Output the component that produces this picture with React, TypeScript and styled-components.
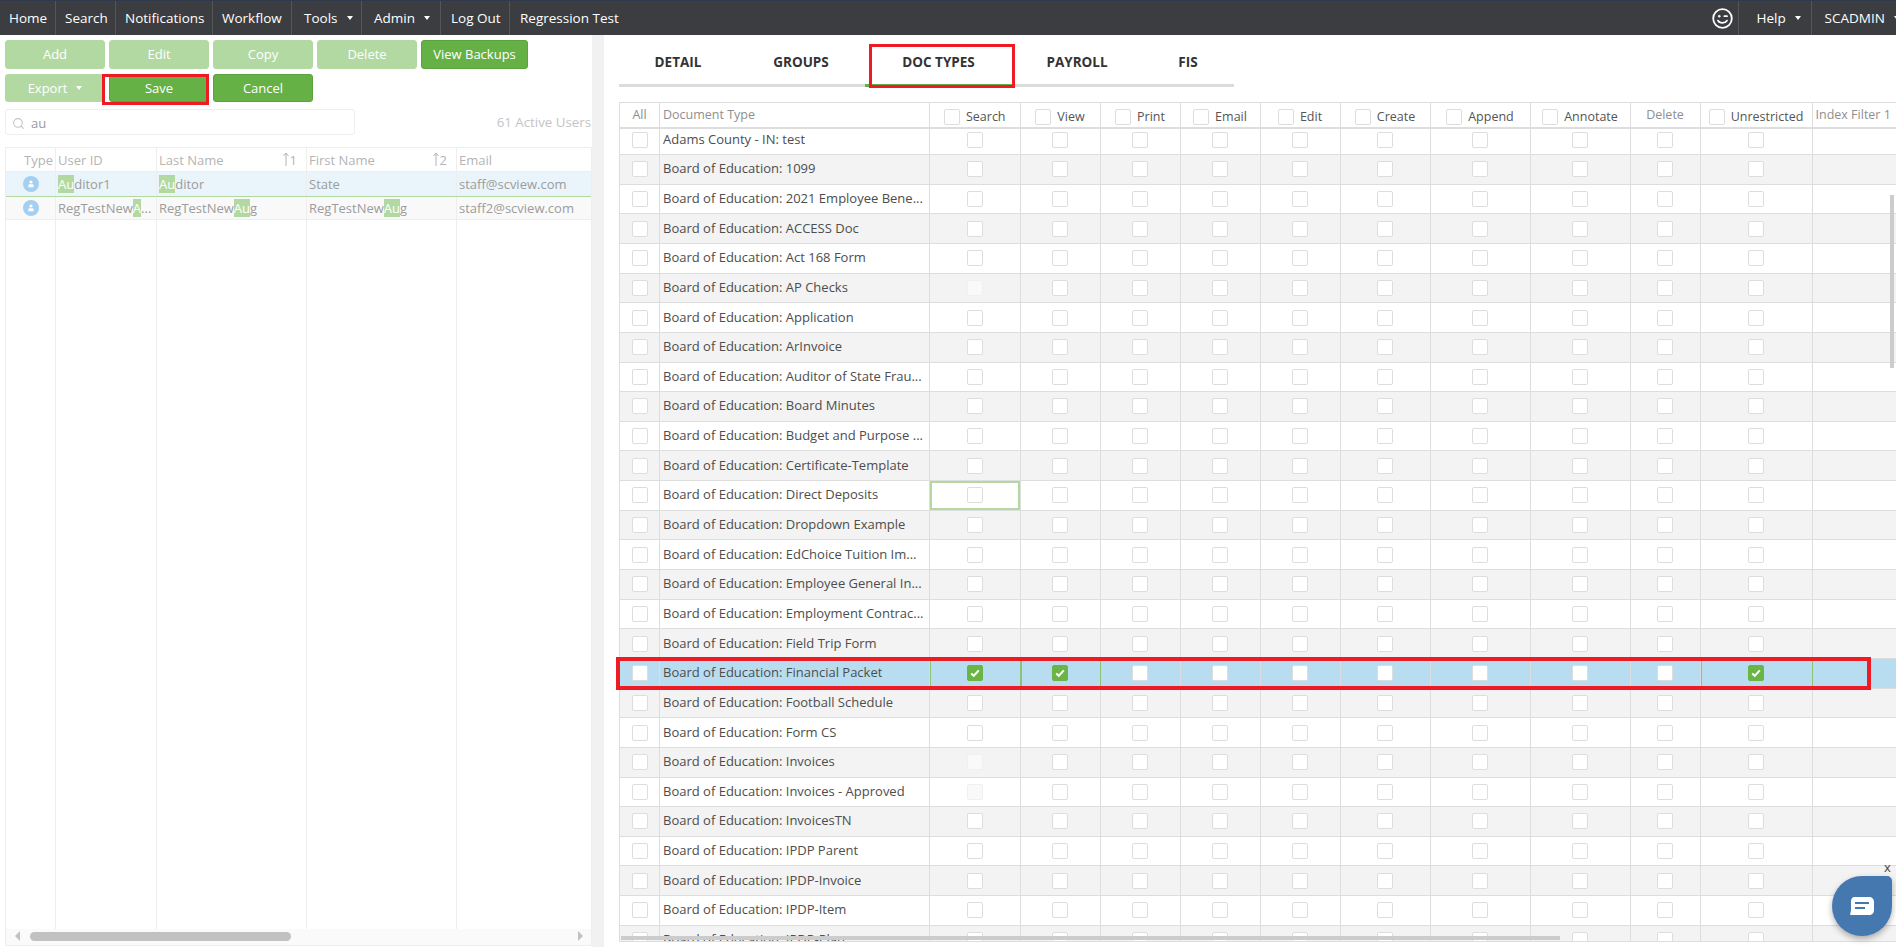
import React from "react";
import styled, { createGlobalStyle } from "styled-components";
import { Search as SearchIcon } from "lucide-react";

const Global = createGlobalStyle`
  html, body { margin: 0; padding: 0; background: #fff; }
  * { box-sizing: border-box; }
  body { font-family: "Open Sans", "Liberation Sans", sans-serif; font-size: 12px; }
`;

const Page = styled.div`
  position: relative;
  width: 1896px;
  height: 947px;
  overflow: hidden;
  display: flex;
  flex-direction: column;
  background: #fff;
`;

const Nav = styled.nav`
  height: 35px;
  flex: none;
  display: flex;
  align-items: stretch;
  background: #3c3d40;
  border-top: 1px solid #2f3a4d;
  color: #fff;
  font-size: 13.5px;
`;

const NavItem = styled.div<{ $w: number; $pad?: number; $plain?: boolean }>`
  width: ${(p) => p.$w}px;
  flex: none;
  display: flex;
  align-items: center;
  padding-left: ${(p) => p.$pad ?? 9}px;
  white-space: nowrap;
  border-right: ${(p) => (p.$plain ? "none" : "1px solid #55565a")};
`;

const NavSpacer = styled.div`
  flex: 1;
`;

const Caret = styled.span`
  display: inline-block;
  vertical-align: 3px;
  margin-left: 9px;
  width: 0;
  height: 0;
  border-left: 3.5px solid transparent;
  border-right: 3.5px solid transparent;
  border-top: 4px solid #fff;
`;

const Body = styled.div`
  flex: 1;
  min-height: 0;
  display: flex;
`;

const LeftPanel = styled.section`
  width: 592px;
  flex: none;
  display: flex;
  flex-direction: column;
  padding: 5px 0 1px 5px;
`;

const Divider = styled.div`
  width: 12px;
  flex: none;
  background: #f1f1f1;
`;

const ButtonRow = styled.div`
  display: flex;
  gap: 4px;
  margin-bottom: 5px;
`;

const Btn = styled.button<{ $w?: number; $h: number; $faded?: boolean }>`
  width: ${(p) => p.$w ?? 100}px;
  height: ${(p) => p.$h}px;
  flex: none;
  padding: 0 0 1px;
  font: inherit;
  font-size: 13px;
  color: #fff;
  border-radius: 3px;
  background: ${(p) => (p.$faded ? "#b3d9a3" : "#66b145")};
  border: 1px solid ${(p) => (p.$faded ? "#b3d9a3" : "#5ca23d")};
`;

const SearchRow = styled.div`
  display: flex;
  align-items: center;
  justify-content: space-between;
  margin-top: 2px;
  height: 26px;
`;

const SearchBox = styled.div`
  width: 350px;
  height: 26px;
  border: 1px solid #eee;
  border-radius: 3px;
  display: flex;
  align-items: center;
  padding: 2px 0 0 6px;
  gap: 6px;
  color: #9a9a9a;
  font-size: 13px;
`;

const UserCount = styled.div`
  color: #c4c4c4;
  font-size: 13.3px;
  white-space: nowrap;
  padding-right: 1px;
`;

const UserTable = styled.div`
  margin-top: 12px;
  flex: 1;
  min-height: 0;
  display: flex;
  flex-direction: column;
  border: 1px solid #eee;
  color: #9c9c9c;
  font-size: 13px;
`;

const UserRow = styled.div<{ $bg?: string; $line?: string; $h?: number; $fill?: boolean }>`
  display: grid;
  grid-template-columns: 50px 101px 150px 150px 1fr;
  height: ${(p) => (p.$fill ? "auto" : `${p.$h}px`)};
  flex: ${(p) => (p.$fill ? 1 : "none")};
  background: ${(p) => p.$bg ?? "#fff"};
  border-bottom: ${(p) => (p.$line ? `1px solid ${p.$line}` : "none")};
`;

const UserCell = styled.div<{ $right?: boolean; $center?: boolean }>`
  min-width: 0;
  display: flex;
  align-items: center;
  justify-content: ${(p) => (p.$center ? "center" : p.$right ? "flex-end" : "flex-start")};
  padding: 0 2px;
  white-space: nowrap;
  overflow: hidden;
  border-right: 1px solid #eeeeee;
  &:last-child { border-right: none; }
`;

const HeadLabel = styled.span`
  flex: 1;
  color: #b4b4b4;
`;

const HeadLabelEnd = styled.span`
  color: #b4b4b4;
`;

const SortMark = styled.span`
  display: flex;
  align-items: center;
  margin-right: 7px;
  color: #b4b4b4;
`;

const Hit = styled.mark`
  background: #b3d9a3;
  color: #fff;
  padding: 3px 0;
`;

const Clip = styled.span`
  overflow: hidden;
  white-space: nowrap;
`;

const HScroll = styled.div`
  height: 16px;
  flex: none;
  display: flex;
  align-items: center;
  background: #fafafa;
  padding: 0 8px 2px 9px;
`;

const HThumb = styled.div`
  width: 261px;
  height: 9px;
  margin-left: 10px;
  border-radius: 5px;
  background: #c1c1c1;
`;

const HSpacer = styled.div`
  flex: 1;
`;

const ArrowL = styled.span`
  width: 0;
  height: 0;
  border-top: 5px solid transparent;
  border-bottom: 5px solid transparent;
  border-right: 5px solid #c1c1c1;
`;

const ArrowR = styled.span`
  width: 0;
  height: 0;
  border-top: 5px solid transparent;
  border-bottom: 5px solid transparent;
  border-left: 5px solid #c1c1c1;
`;

const RightPanel = styled.section`
  position: relative;
  flex: 1;
  min-width: 0;
  display: flex;
  flex-direction: column;
  padding-left: 15px;
`;

const Tabs = styled.div`
  width: 615px;
  height: 52px;
  flex: none;
  display: flex;
  border-bottom: 3px solid #dcdcdc;
`;

const Tab = styled.div<{ $w: number; $active?: boolean }>`
  width: ${(p) => p.$w}px;
  height: 52px;
  flex: none;
  padding-top: 4px;
  display: flex;
  align-items: center;
  justify-content: center;
  font-weight: 700;
  font-size: 13.5px;
  color: #333;
  border-bottom: 3px solid ${(p) => (p.$active ? "#66b145" : "transparent")};
`;

const DocTable = styled.div`
  margin-top: 15px;
  flex: none;
  height: 840px;
  display: flex;
  flex-direction: column;
  overflow: hidden;
  border-left: 1px solid #dddddd;
  border-bottom: 1px solid #dddddd;
  color: #4d4d4d;
  font-size: 13px;
`;

const COLS = "40px 270px 90.5px 80px 80px 80px 80px 90px 100px 100px 70px 112px 85px";

const HeadRow = styled.div`
  display: grid;
  grid-template-columns: ${COLS};
  height: 27px;
  flex: none;
  position: relative;
  z-index: 1;
  background: #fff;
  border-top: 1px solid #dddddd;
  border-bottom: 2px solid #dddddd;
`;

const HeadCell = styled.div<{ $align?: string; $muted?: boolean; $up?: boolean }>`
  min-width: 0;
  display: flex;
  align-items: center;
  justify-content: ${(p) => p.$align ?? "center"};
  gap: 6px;
  padding: ${(p) => (p.$up ? "0 3px 2px" : "3px 3px 0")};
  white-space: nowrap;
  overflow: hidden;
  font-size: 12.5px;
  color: ${(p) => (p.$muted ? "#8f8f8f" : "#555")};
  border-right: 1px solid #dddddd;
`;

const RowsViewport = styled.div`
  flex: 1;
  min-height: 0;
  overflow: hidden;
`;

const RowsInner = styled.div`
  margin-top: -3.6px;
`;

const DocRow = styled.div<{ $bg: string }>`
  display: grid;
  grid-template-columns: ${COLS};
  height: 29.65px;
  background: ${(p) => p.$bg};
  border-bottom: 1px solid #dddddd;
`;

const DocCell = styled.div<{ $state?: "on" | "focus" }>`
  min-width: 0;
  display: flex;
  align-items: center;
  justify-content: center;
  border-right: 1px solid ${(p) => (p.$state === "on" ? "#8cc474" : "#dddddd")};
  box-shadow: ${(p) =>
    p.$state === "on"
      ? "inset 1px 0 0 #8cc474"
      : p.$state === "focus"
      ? "inset 0 0 0 2px #b3d9a3"
      : "none"};
`;

const NameCell = styled(DocCell)`
  justify-content: flex-start;
  padding: 0 3px 2px;
`;

const Box = styled.span<{ $state?: "on" | "off" }>`
  width: 16px;
  height: 16px;
  flex: none;
  display: inline-flex;
  align-items: center;
  justify-content: center;
  border-radius: 2px;
  background: ${(p) => (p.$state === "on" ? "#6bb544" : p.$state === "off" ? "#f9f9f9" : "#fff")};
  border: 1px solid ${(p) => (p.$state === "on" ? "#6bb544" : p.$state === "off" ? "#f0f0f0" : "#dddddd")};
`;

const VScrollThumb = styled.div`
  position: absolute;
  right: 2px;
  top: 160px;
  width: 4px;
  height: 173px;
  background: #cccccc;
`;

const BottomThumb = styled.div`
  position: absolute;
  left: 17px;
  top: 901px;
  width: 939px;
  height: 4px;
  background: #cccccc;
`;

const RedFrame = styled.div<{ $x: number; $y: number; $w: number; $h: number; $t: number }>`
  position: absolute;
  left: ${(p) => p.$x}px;
  top: ${(p) => p.$y}px;
  width: ${(p) => p.$w}px;
  height: ${(p) => p.$h}px;
  border: ${(p) => p.$t}px solid #ed1c24;
  pointer-events: none;
`;

const ChatClose = styled.div`
  position: absolute;
  left: 1884px;
  top: 859px;
  color: #444;
  font-size: 13px;
  line-height: 16px;
`;

const ChatBubble = styled.div`
  position: absolute;
  left: 1832px;
  top: 876px;
  width: 60px;
  height: 60px;
  display: flex;
  align-items: center;
  justify-content: center;
  background: #4678b0;
  border-radius: 50% 5px 50% 50%;
  box-shadow: 0 3px 6px rgba(0, 0, 0, 0.3);
`;

const Check = () => (
  <svg width="12" height="12" viewBox="0 0 12 12" fill="none">
    <path d="M2.2 6.4 4.8 8.8 9.8 3.4" stroke="#fff" strokeWidth="2" />
  </svg>
);

const Person = () => (
  <svg width="16" height="16" viewBox="0 0 16 16">
    <circle cx="8" cy="8" r="8" fill="#a4cff0" />
    <circle cx="8" cy="6" r="1.6" fill="#fff" />
    <path d="M5.4 11.2V9.6c0-.8.6-1.3 1.3-1.3h2.6c.7 0 1.3.5 1.3 1.3v1.6z" fill="#fff" />
  </svg>
);

const Arrow = () => (
  <svg width="8" height="15" viewBox="0 0 8 15" fill="none" stroke="#b4b4b4" strokeWidth="1">
    <path d="M4 14V1M1.5 4 4 1l2.5 3" />
  </svg>
);

const Smiley = () => (
  <svg width="21" height="21" viewBox="0 0 21 21" fill="none" stroke="#fff" strokeWidth="1.8" strokeLinecap="round">
    <circle cx="10.5" cy="10.5" r="9.3" />
    <circle cx="7.2" cy="8.2" r="1" fill="#fff" strokeWidth="0.6" />
    <path d="M12.4 8.2h2.6" />
    <path d="M6 12.6c1.6 3 7.2 3 9 0" />
  </svg>
);

const ChatIcon = () => (
  <svg width="24" height="18" viewBox="0 0 24 18">
    <path d="M5 0h14c3 0 5 2 5 5v8c0 3-2 5-5 5H1c-.6 0-1-.5-.8-1C.6 15 1 14 1 13V5c0-3 1-5 4-5z" fill="#fff" />
    <path d="M5 6h14M5 11h10" stroke="#4678b0" strokeWidth="2" />
  </svg>
);

const DOCS = [
  "Adams County - IN: test",
  "Board of Education: 1099",
  "Board of Education: 2021 Employee Bene...",
  "Board of Education: ACCESS Doc",
  "Board of Education: Act 168 Form",
  "Board of Education: AP Checks",
  "Board of Education: Application",
  "Board of Education: ArInvoice",
  "Board of Education: Auditor of State Frau...",
  "Board of Education: Board Minutes",
  "Board of Education: Budget and Purpose ...",
  "Board of Education: Certificate-Template",
  "Board of Education: Direct Deposits",
  "Board of Education: Dropdown Example",
  "Board of Education: EdChoice Tuition Im...",
  "Board of Education: Employee General In...",
  "Board of Education: Employment Contrac...",
  "Board of Education: Field Trip Form",
  "Board of Education: Financial Packet",
  "Board of Education: Football Schedule",
  "Board of Education: Form CS",
  "Board of Education: Invoices",
  "Board of Education: Invoices - Approved",
  "Board of Education: InvoicesTN",
  "Board of Education: IPDP Parent",
  "Board of Education: IPDP-Invoice",
  "Board of Education: IPDP-Item",
  "Board of Education: IPDP-Plan",
];

const PERMS = ["Search", "View", "Print", "Email", "Edit", "Create", "Append", "Annotate", "Delete", "Unrestricted"];
const SELECTED = "Board of Education: Financial Packet";
const FOCUSED = "Board of Education: Direct Deposits";
const SEARCH_OFF = ["Board of Education: AP Checks", "Board of Education: Invoices", "Board of Education: Invoices - Approved"];
const CHECKED = ["Search", "View", "Unrestricted"];

export default function App() {
  return (
    <Page>
      <Global />
      <Nav>
        <NavItem $w={56}>Home</NavItem>
        <NavItem $w={60}>Search</NavItem>
        <NavItem $w={97}>Notifications</NavItem>
        <NavItem $w={79}>Workflow</NavItem>
        <NavItem $w={70} $pad={12}>Tools<Caret /></NavItem>
        <NavItem $w={79} $pad={12}>Admin<Caret /></NavItem>
        <NavItem $w={69} $pad={10}>Log Out</NavItem>
        <NavItem $w={140} $pad={10} $plain>Regression Test</NavItem>
        <NavSpacer />
        <NavItem $w={27} $pad={0}><Smiley /></NavItem>
        <NavItem $w={73} $pad={18}>Help<Caret /></NavItem>
        <NavItem $w={84.5} $pad={13} $plain>SCADMIN<Caret /></NavItem>
      </Nav>
      <Body>
        <LeftPanel>
          <ButtonRow>
            <Btn $h={29} $faded>Add</Btn>
            <Btn $h={29} $faded>Edit</Btn>
            <Btn $h={29} $faded>Copy</Btn>
            <Btn $h={29} $faded>Delete</Btn>
            <Btn $h={29} $w={107}>View Backups</Btn>
          </ButtonRow>
          <ButtonRow>
            <Btn $h={28} $faded>Export<Caret /></Btn>
            <Btn $h={28}>Save</Btn>
            <Btn $h={28}>Cancel</Btn>
          </ButtonRow>
          <SearchRow>
            <SearchBox>
              <SearchIcon size={13} color="#c4c4c4" />
              au
            </SearchBox>
            <UserCount>61 Active Users</UserCount>
          </SearchRow>
          <UserTable>
            <UserRow $h={24} $line="#eeeeee">
              <UserCell $right><HeadLabelEnd>Type</HeadLabelEnd></UserCell>
              <UserCell><HeadLabel>User ID</HeadLabel></UserCell>
              <UserCell><HeadLabel>Last Name</HeadLabel><SortMark><Arrow />1</SortMark></UserCell>
              <UserCell><HeadLabel>First Name</HeadLabel><SortMark><Arrow />2</SortMark></UserCell>
              <UserCell><HeadLabel>Email</HeadLabel></UserCell>
            </UserRow>
            <UserRow $h={25} $bg="#eaf4fb" $line="#b3d9a3">
              <UserCell $center><Person /></UserCell>
              <UserCell><Clip><Hit>Au</Hit>ditor1</Clip></UserCell>
              <UserCell><Clip><Hit>Au</Hit>ditor</Clip></UserCell>
              <UserCell>State</UserCell>
              <UserCell>staff@scview.com</UserCell>
            </UserRow>
            <UserRow $h={23} $bg="#f9f9f9" $line="#eeeeee">
              <UserCell $center><Person /></UserCell>
              <UserCell><Clip>RegTestNew<Hit>A</Hit>...</Clip></UserCell>
              <UserCell><Clip>RegTestNew<Hit>Au</Hit>g</Clip></UserCell>
              <UserCell><Clip>RegTestNew<Hit>Au</Hit>g</Clip></UserCell>
              <UserCell>staff2@scview.com</UserCell>
            </UserRow>
            <UserRow $fill>
              <UserCell /><UserCell /><UserCell /><UserCell /><UserCell />
            </UserRow>
            <HScroll>
              <ArrowL />
              <HThumb />
              <HSpacer />
              <ArrowR />
            </HScroll>
          </UserTable>
        </LeftPanel>
        <Divider />
        <RightPanel>
          <Tabs>
            <Tab $w={118}>DETAIL</Tab>
            <Tab $w={128}>GROUPS</Tab>
            <Tab $w={147} $active>DOC TYPES</Tab>
            <Tab $w={130}>PAYROLL</Tab>
            <Tab $w={92}>FIS</Tab>
          </Tabs>
          <DocTable>
            <HeadRow>
              <HeadCell $muted $up>All</HeadCell>
              <HeadCell $muted $up $align="flex-start">Document Type</HeadCell>
              {PERMS.map((p) =>
                p === "Delete" ? (
                  <HeadCell key={p} $muted $up>{p}</HeadCell>
                ) : (
                  <HeadCell key={p}><Box />{p}</HeadCell>
                )
              )}
              <HeadCell $muted $up $align="flex-start">Index Filter 1</HeadCell>
            </HeadRow>
            <RowsViewport>
              <RowsInner>
                {DOCS.map((name, i) => {
                  const selected = name === SELECTED;
                  return (
                    <DocRow key={name} $bg={selected ? "#b9ddf0" : i % 2 ? "#f3f3f3" : "#fff"}>
                      <DocCell><Box /></DocCell>
                      <NameCell><Clip>{name}</Clip></NameCell>
                      {PERMS.map((p) => {
                        const on = selected && CHECKED.includes(p);
                        const focus = name === FOCUSED && p === "Search";
                        const off = p === "Search" && SEARCH_OFF.includes(name);
                        return (
                          <DocCell key={p} $state={on ? "on" : focus ? "focus" : undefined}>
                            <Box $state={on ? "on" : off ? "off" : undefined}>{on && <Check />}</Box>
                          </DocCell>
                        );
                      })}
                      <DocCell />
                    </DocRow>
                  );
                })}
              </RowsInner>
            </RowsViewport>
          </DocTable>
          <VScrollThumb />
          <BottomThumb />
        </RightPanel>
      </Body>
      <RedFrame $x={102} $y={74} $w={107} $h={31} $t={3} />
      <RedFrame $x={869} $y={44} $w={146} $h={44} $t={3} />
      <RedFrame $x={616} $y={657} $w={1255} $h={33} $t={4} />
      <ChatClose>x</ChatClose>
      <ChatBubble><ChatIcon /></ChatBubble>
    </Page>
  );
}
